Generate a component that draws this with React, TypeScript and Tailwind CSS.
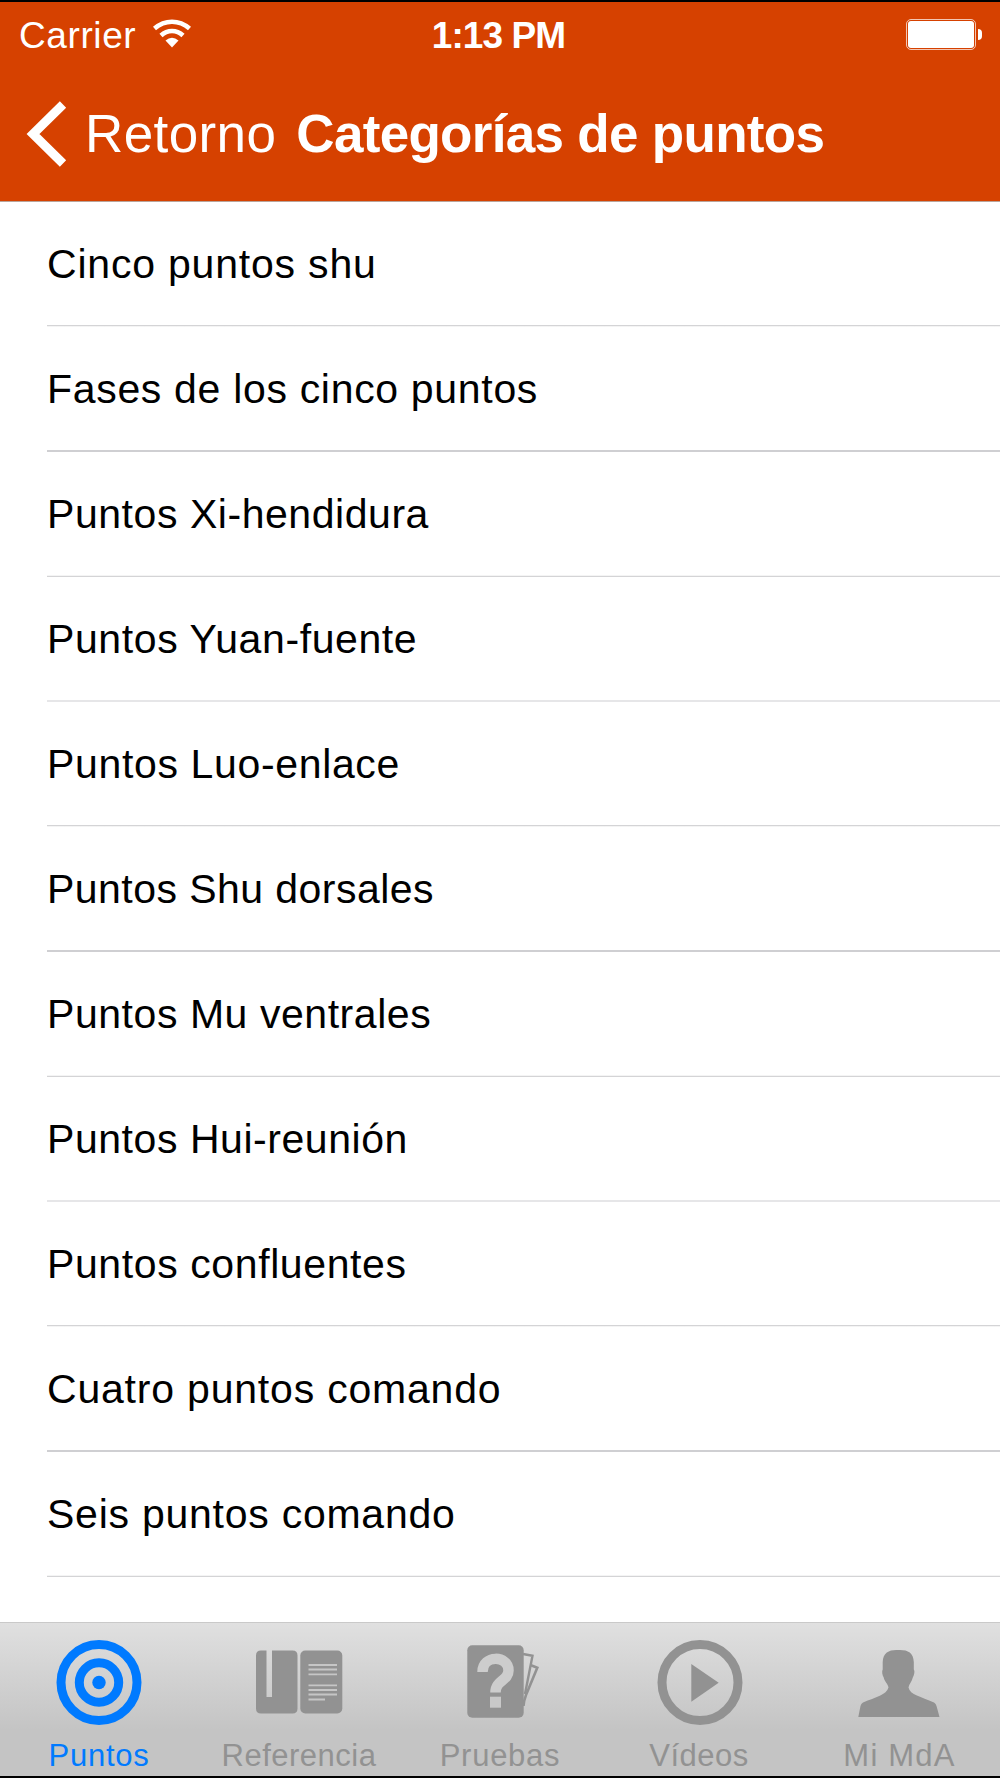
import React from "react";

const categories = [
    { label: "Cinco puntos shu", spacing: "tracking-[0.8px]", line: "bg-linear-to-b from-[#d4d4d6] from-50% to-[#f4f4f4] to-50%" },
    { label: "Fases de los cinco puntos", spacing: "tracking-[0.68px]", line: "bg-[#cfcfd2]" },
    { label: "Puntos Xi-hendidura", spacing: "tracking-[0.55px]", line: "bg-linear-to-b from-[#f4f4f4] from-50% to-[#d4d4d6] to-50%" },
    { label: "Puntos Yuan-fuente", spacing: "tracking-[0.6px]", line: "bg-[#e6e6e8]" },
    { label: "Puntos Luo-enlace", spacing: "tracking-[0.65px]", line: "bg-linear-to-b from-[#d4d4d6] from-50% to-[#f4f4f4] to-50%" },
    { label: "Puntos Shu dorsales", spacing: "tracking-[0.45px]", line: "bg-[#cfcfd2]" },
    { label: "Puntos Mu ventrales", spacing: "tracking-[0.55px]", line: "bg-linear-to-b from-[#f4f4f4] from-50% to-[#d4d4d6] to-50%" },
    { label: "Puntos Hui-reunión", spacing: "tracking-[0.55px]", line: "bg-[#e6e6e8]" },
    { label: "Puntos confluentes", spacing: "tracking-[0.6px]", line: "bg-linear-to-b from-[#d4d4d6] from-50% to-[#f4f4f4] to-50%" },
    { label: "Cuatro puntos comando", spacing: "tracking-[0.8px]", line: "bg-[#cfcfd2]" },
    { label: "Seis puntos comando", spacing: "tracking-[0.75px]", line: "bg-linear-to-b from-[#f4f4f4] from-50% to-[#d4d4d6] to-50%" },
];

const TargetIcon = () => (
    <svg width="90" height="90" viewBox="0 0 90 90" fill="none" stroke="currentColor" strokeWidth="9">
        <circle cx="45" cy="44.5" r="38" />
        <circle cx="45" cy="44.5" r="19.7" />
        <circle cx="45" cy="44.5" r="6.7" fill="currentColor" stroke="none" />
    </svg>
);

const BookIcon = () => (
    <svg width="90" height="90" viewBox="0 0.5 90 90" fill="currentColor">
        <path d="M7 13H12.5V59.5H18V13H38.5Q43.5 13 43.5 18V71Q43.5 76 38.5 76H7Q2 76 2 71V18Q2 13 7 13Z" />
        <rect x="46.3" y="13" width="42" height="63" rx="5" />
        <path
            d="M54.5 27.5H83M54.5 32H83M54.5 36.8H83M54.5 47.8H83M54.5 52.5H83M54.5 57H83M54.5 62H71"
            stroke="#c6c6c6"
            strokeWidth="1.8"
        />
    </svg>
);

const QuizIcon = () => (
    <svg width="90" height="90" viewBox="0 0 90 90" fill="none" stroke="currentColor">
        <path d="M68 16L77.5 17.8L70 56" strokeWidth="2.4" />
        <path d="M76 27.3L82.3 29.8L71 57Q69 62 68.5 68" strokeWidth="2.6" />
        <rect x="12.3" y="7.2" width="56.4" height="72.5" rx="5" fill="currentColor" stroke="none" />
        <path d="M27.5 34C27.5 16.500 53.5 17 53.5 32.500C53.5 43 40.5 42 40.5 54.500" stroke="#cdcdcd" strokeWidth="10.500" />
        <rect x="35" y="58.7" width="11" height="11" fill="#c8c8c8" stroke="none" />
    </svg>
);

const PlayIcon = () => (
    <svg width="90" height="90" viewBox="0 0 90 90" fill="currentColor">
        <circle cx="45" cy="44.5" r="38" fill="none" stroke="currentColor" strokeWidth="9" />
        <path d="M36.3 26L63.7 44.8L36.3 63.700Z" />
    </svg>
);

const PersonIcon = () => (
    <svg width="90" height="90" viewBox="0 0 90 90" fill="currentColor">
        <path d="M43 12C52 11.500 58.5 14 58.8 24V31.500C60 33 59.300 37 57.800 39.500C57 43.500 54 46 53.500 49.500C55 57 66 58.500 79 64.500Q81 65.500 81.500 68L84.500 79H3.300L5.500 68Q6 65.500 8 64.500C21 59 31.500 57 33.500 49.500C33 46 29.500 43.500 28.700 39.500C27.200 37 26.700 33 27.700 31.500V24C28 14 35 11.500 43 12Z" />
    </svg>
);

const tabs = [
    { id: 1, label: "Puntos", icon: <TargetIcon />, width: "w-[198px]", spacing: "tracking-[0.75px]" },
    { id: 2, label: "Referencia", icon: <BookIcon />, width: "w-[202px]", spacing: "tracking-[0.5px]" },
    { id: 3, label: "Pruebas", icon: <QuizIcon />, width: "w-[200px]", spacing: "tracking-[0.75px]" },
    { id: 4, label: "Vídeos", icon: <PlayIcon />, width: "w-[200px]", spacing: "tracking-[0.5px] pr-[2px]" },
    { id: 5, label: "Mi MdA", icon: <PersonIcon />, width: "w-[200px]", spacing: "tracking-[1.2px] pr-px" },
];

function StatusBar() {
    return (
        <div className="grid h-[64px] grid-cols-3 items-center pl-[19px] pr-[18px]">
            <div className="flex items-center gap-[16px]">
                <span className="pt-[2px] text-[37px] leading-[64px] tracking-[0.6px]">Carrier</span>
                <svg width="40" height="30" viewBox="0 0 40 30" className="-mt-[3px]" fill="none" stroke="white">
                    <path d="M2.500 9.500C13 0.500 27 0.500 37.500 9.500" strokeWidth="4.600" />
                    <path d="M9 16.500C15.500 10.500 24.500 10.500 31 16.500" strokeWidth="4.600" />
                    <path d="M13.500 21.500Q20 16 26.500 21.500L20 28.500Z" fill="white" stroke="none" />
                </svg>
            </div>
            <span className="pt-[2px] pr-[4px] text-center text-[37px] leading-[64px] font-bold tracking-[-0.9px]">1:13 PM</span>
            <div className="flex items-center justify-end gap-[2px] pb-px">
                <div className="h-[31px] w-[70px] rounded-[5px] border border-white/70 p-px">
                    <div className="h-full rounded-[3px] bg-white" />
                </div>
                <div className="h-[11px] w-[4px] rounded-r-full bg-white" />
            </div>
        </div>
    );
}

export default function App() {
    const activeTab = 1;

    return (
        <div className="flex h-[1778px] w-[1000px] flex-col overflow-hidden border-y-2 border-black bg-white font-['Liberation_Sans',Arial,sans-serif]">
            {/* Header */}
            <header className="h-[200px] shrink-0 border-b border-[#b9a49b] bg-[#d64100] text-white">
                <StatusBar />
                <div className="flex h-[135px] items-center pl-[26px]">
                    <svg width="41" height="66" viewBox="0 0 41 66" fill="none" stroke="white" strokeWidth="9">
                        <path d="M37 3.500L7 33L37 62.500" />
                    </svg>
                    <span className="ml-[18px] text-[53px] leading-[60px] tracking-[0.4px]">Retorno</span>
                    <h1 className="ml-[20px] text-[53px] leading-[60px] font-bold tracking-[-0.7px]">Categorías de puntos</h1>
                </div>
            </header>

            {/* Category list */}
            <ul className="flex-1 overflow-hidden pl-[47px]">
                {categories.map((item) => (
                    <li key={item.label} className="h-[125px]">
                        <div className={`h-[123px] text-[41px] leading-[124px] whitespace-nowrap text-black ${item.spacing}`}>
                            {item.label}
                        </div>
                        <div className={`h-[2px] ${item.line}`} />
                    </li>
                ))}
            </ul>

            {/* Tab bar */}
            <nav className="flex h-[154px] shrink-0 border-t border-[#c9c9c9] bg-linear-to-b from-[#e0e0e0] to-[#c4c4c4] to-70%">
                {tabs.map((tab) => (
                    <button
                        key={tab.id}
                        className={`flex flex-col items-center pt-[15px] ${tab.width} ${tab.id === activeTab ? "text-[#007aff]" : "text-[#929292]"}`}
                    >
                        {tab.icon}
                        <span className={`mt-[10px] text-[31px] leading-[36px] whitespace-nowrap ${tab.spacing}`}>{tab.label}</span>
                    </button>
                ))}
            </nav>
        </div>
    );
}
